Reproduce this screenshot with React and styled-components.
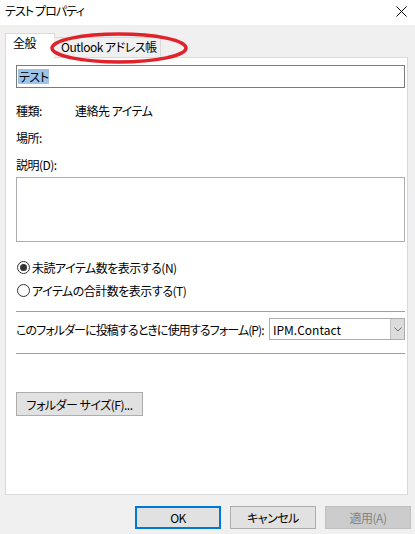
import styled, { createGlobalStyle } from "styled-components";

const font = `"Noto Sans CJK JP", "Noto Sans", sans-serif`;

const GlobalStyle = createGlobalStyle`
  html, body {
    margin: 0;
    padding: 0;
    background: #f0f0f0;
  }
  body {
    font-family: ${font};
    font-size: 12px;
    font-feature-settings: "palt";
    letter-spacing: -0.5px;
    color: #000;
  }
  * {
    box-sizing: border-box;
  }
`;

const Window = styled.div`
  position: relative;
  width: 415px;
  height: 534px;
  display: flex;
  flex-direction: column;
  background: #f0f0f0;
  overflow: hidden;
`;

const TitleBar = styled.div`
  height: 25px;
  background: #ffffff;
  display: flex;
  align-items: center;
  justify-content: space-between;
  padding: 0 8px 3px 5px;
  line-height: 16px;
  letter-spacing: -0.9px;
`;

const TabStrip = styled.div`
  display: flex;
  align-items: flex-end;
  height: 24px;
  margin: 8px 0 0 5px;
  position: relative;
  z-index: 1;
`;

const Tab = styled.div`
  line-height: 16px;
  white-space: nowrap;
  border: 1px solid #d9d9d9;
  border-bottom: none;
  padding-top: 1px;
  ${(p) =>
    p.$active
      ? `
    height: 25px;
    margin-bottom: -1px;
    background: #ffffff;
    padding-left: 7px;
    padding-right: 18px;
  `
      : `
    height: 20px;
    margin-left: -1px;
    background: #f0f0f0;
    border-left-color: transparent;
    padding-left: 6px;
    padding-right: 3px;
  `}
`;

const Panel = styled.div`
  height: 438px;
  margin: 0 7px 0 5px;
  background: #ffffff;
  border: 1px solid #d9d9d9;
  padding: 7px 2px 0 10px;
  display: flex;
  flex-direction: column;
`;

const NameBox = styled.div`
  height: 23px;
  border: 1px solid #7a7a7a;
  display: flex;
  align-items: center;
  padding-left: 1px;
`;

const Selected = styled.span`
  background: #9cc4e8;
  line-height: 15px;
  padding: 0 1px;
`;

const InfoList = styled.div`
  margin-top: 12px;
  display: flex;
  flex-direction: column;
  gap: 7px;
`;

const InfoRow = styled.div`
  height: 20px;
  display: flex;
  align-items: center;
`;

const InfoLabel = styled.span`
  width: 59px;
`;

const Memo = styled.textarea`
  margin-top: 3px;
  height: 65px;
  width: 100%;
  border: 1px solid #abadb3;
  resize: none;
  outline: none;
  font: inherit;
`;

const RadioGroup = styled.div`
  margin-top: 15px;
  display: flex;
  flex-direction: column;
  gap: 3px;
`;

const RadioRow = styled.label`
  height: 20px;
  display: flex;
  align-items: center;
  gap: 2px;
  padding-left: 1px;
`;

const RadioDot = styled.span`
  width: 13px;
  height: 13px;
  border-radius: 50%;
  border: 1px solid #333333;
  background: #ffffff;
  display: flex;
  align-items: center;
  justify-content: center;
  &::after {
    content: "";
    width: 7px;
    height: 7px;
    border-radius: 50%;
    background: ${(p) => (p.$checked ? "#333333" : "transparent")};
  }
`;

const Separator = styled.div`
  margin-top: ${(p) => p.$top}px;
  border-top: 1px solid #a0a0a0;
  height: 1px;
`;

const FormRow = styled.div`
  margin-top: 6px;
  height: 22px;
  display: flex;
  align-items: center;
  justify-content: space-between;
`;

const FormLabel = styled.span`
  white-space: nowrap;
  letter-spacing: -0.9px;
`;

const Combo = styled.div`
  width: 136px;
  flex-shrink: 0;
  height: 22px;
  border: 1px solid #adadad;
  display: flex;
  align-items: center;
  justify-content: space-between;
  padding-left: 3px;
  letter-spacing: 0;
`;

const ComboArrow = styled.span`
  width: 14px;
  height: 20px;
  background: #dcdcdc;
  border-left: 1px solid #c4c4c4;
  display: flex;
  align-items: center;
  justify-content: center;
`;

const SizeButton = styled.button`
  margin-top: 38px;
  align-self: flex-start;
  width: 127px;
  height: 24px;
  background: #e1e1e1;
  border: 1px solid #adadad;
  font: inherit;
  letter-spacing: inherit;
  color: #000;
  padding: 0;
`;

const Footer = styled.div`
  display: flex;
  justify-content: flex-end;
  gap: 9px;
  padding: 11px 4px 0 0;
`;

const DialogButton = styled.button`
  width: 86px;
  height: 23px;
  padding: 0;
  font: inherit;
  letter-spacing: inherit;
  background: ${(p) => (p.$disabled ? "#cccccc" : "#e1e1e1")};
  color: ${(p) => (p.$disabled ? "#838383" : "#000")};
  border: ${(p) =>
    p.$default ? "2px solid #0078d7" : p.$disabled ? "1px solid #bfbfbf" : "1px solid #adadad"};
`;

const Annotation = styled.svg`
  position: absolute;
  left: 48px;
  top: 30px;
  z-index: 2;
  pointer-events: none;
`;

function App() {
  return (
    <Window>
      <GlobalStyle />
      <TitleBar>
        <span>テスト プロパティ</span>
        <svg width="11" height="11" viewBox="0 0 11 11">
          <path d="M0.5 0.5 L10.5 10.5 M10.5 0.5 L0.5 10.5" stroke="#000" strokeWidth="1" />
        </svg>
      </TitleBar>

      <TabStrip>
        <Tab $active>全般</Tab>
        <Tab>Outlook アドレス帳</Tab>
      </TabStrip>

      <Panel>
        <NameBox>
          <Selected>テスト</Selected>
        </NameBox>

        <InfoList>
          <InfoRow>
            <InfoLabel>種類:</InfoLabel>
            <span>連絡先 アイテム</span>
          </InfoRow>
          <InfoRow>
            <InfoLabel>場所:</InfoLabel>
          </InfoRow>
          <InfoRow>
            <InfoLabel>説明(D):</InfoLabel>
          </InfoRow>
        </InfoList>
        <Memo readOnly />

        <RadioGroup>
          <RadioRow>
            <RadioDot $checked />
            未読アイテム数を表示する(N)
          </RadioRow>
          <RadioRow>
            <RadioDot />
            アイテムの合計数を表示する(T)
          </RadioRow>
        </RadioGroup>

        <Separator $top={11} />
        <FormRow>
          <FormLabel>このフォルダーに投稿するときに使用するフォーム(P):</FormLabel>
          <Combo>
            <span>IPM.Contact</span>
            <ComboArrow>
              <svg width="8" height="5" viewBox="0 0 8 5">
                <path d="M0.5 0.5 L4 4 L7.5 0.5" fill="none" stroke="#6d6d6d" strokeWidth="1" />
              </svg>
            </ComboArrow>
          </Combo>
        </FormRow>
        <Separator $top={13} />

        <SizeButton>フォルダー サイズ(F)...</SizeButton>
      </Panel>

      <Footer>
        <DialogButton $default>OK</DialogButton>
        <DialogButton>キャンセル</DialogButton>
        <DialogButton $disabled>適用(A)</DialogButton>
      </Footer>

      <Annotation width="142" height="36" viewBox="0 0 142 36">
        <ellipse cx="71" cy="18" rx="67" ry="14" fill="none" stroke="#e0222a" strokeWidth="3.5" />
      </Annotation>
    </Window>
  );
}

export default App;
